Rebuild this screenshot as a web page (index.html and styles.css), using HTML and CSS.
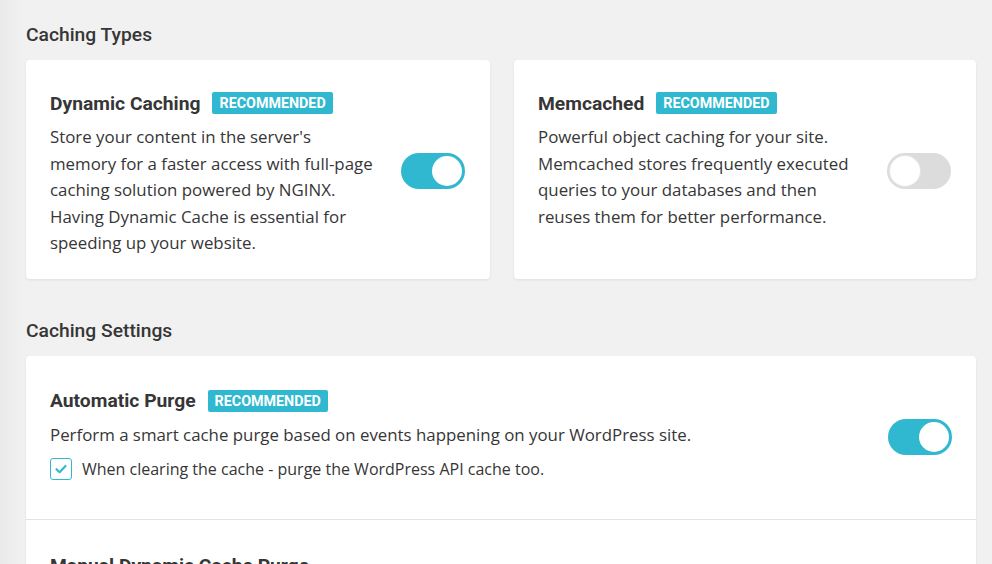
FILE: index.html
```html
<!DOCTYPE html>
<html lang="en">
<head>
    <meta charset="UTF-8">
    <meta name="viewport" content="width=device-width, initial-scale=1.0">
    <title>Caching</title>
    <link rel="stylesheet" href="styles.css">
</head>
<body>
    <div class="page">
        <h2 class="section-title">Caching Types</h2>
        <div class="types">
            <div class="card type-card">
                <div class="card-text">
                    <div class="title-row">
                        <h3>Dynamic Caching</h3>
                        <span class="badge">Recommended</span>
                    </div>
                    <p>Store your content in the server's memory for a faster access with full-page caching solution powered by NGINX. Having Dynamic Cache is essential for speeding up your website.</p>
                </div>
                <span class="toggle on"></span>
            </div>
            <div class="card type-card">
                <div class="card-text">
                    <div class="title-row">
                        <h3>Memcached</h3>
                        <span class="badge">Recommended</span>
                    </div>
                    <p>Powerful object caching for your site. Memcached stores frequently executed queries to your databases and then reuses them for better performance.</p>
                </div>
                <span class="toggle"></span>
            </div>
        </div>

        <h2 class="section-title">Caching Settings</h2>
        <div class="card settings">
            <div class="setting">
                <div class="setting-text">
                    <div class="title-row">
                        <h3>Automatic Purge</h3>
                        <span class="badge">Recommended</span>
                    </div>
                    <p>Perform a smart cache purge based on events happening on your WordPress site.</p>
                    <label class="check-row">
                        <span class="checkbox">
                            <svg width="14" height="14" viewBox="0 0 14 14"><path d="M2.5 7.2 L5.6 10.2 L11.5 4" fill="none" stroke="#2fb8d0" stroke-width="2.2" stroke-linecap="round" stroke-linejoin="round"/></svg>
                        </span>
                        When clearing the cache - purge the WordPress API cache too.
                    </label>
                </div>
                <span class="toggle on"></span>
            </div>
            <div class="setting">
                <div class="setting-text">
                    <div class="title-row">
                        <h3>Manual Dynamic Cache Purge</h3>
                    </div>
                    <p>Purge the dynamic cache manually.</p>
                </div>
            </div>
        </div>
    </div>
</body>
</html>
```

FILE: styles.css
```css
body {
    margin: 0;
    background: #f1f1f1;
    font-family: "Open Sans", sans-serif;
    color: #363636;
    overflow: hidden;
}
.page {
    padding: 23px 16px 0 26px;
    background: linear-gradient(to right, #e9e9e9 0, #f1f1f1 22px);
}
.section-title {
    font-family: Roboto, sans-serif;
    font-weight: 500;
    font-size: 19.25px;
    line-height: 24px;
    margin: 0 0 13px;
    color: #363636;
}
.types {
    display: grid;
    grid-template-columns: 464px 1fr;
    gap: 24px;
    margin-bottom: 40px;
}
.card {
    background: white;
    border-radius: 4px;
    box-shadow: 0 1px 3px rgba(0,0,0,0.08);
}
.type-card {
    display: flex;
    align-items: center;
    justify-content: space-between;
    padding: 25px 25px 22px 24px;
}
.card-text {
    width: 324px;
    align-self: flex-start;
    padding-top: 5px;
}
.title-row {
    display: flex;
    align-items: center;
    gap: 12px;
    height: 26px;
}
.title-row h3 {
    font-family: Roboto, sans-serif;
    font-weight: 700;
    font-size: 19.25px;
    margin: 0;
    color: #363636;
}
.badge {
    font-family: Roboto, sans-serif;
    font-weight: 700;
    font-size: 14.3px;
    text-transform: uppercase;
    color: white;
    background: #2fb8d0;
    border-radius: 2px;
    padding: 0 7px;
    height: 22px;
    line-height: 22px;
}
.card p {
    margin: 8px 0 0;
    font-size: 16.85px;
    line-height: 26.5px;
    color: #363636;
}
.toggle {
    position: relative;
    flex: none;
    width: 64px;
    height: 36px;
    border-radius: 18px;
    background: #dcdcdc;
}
.toggle::after {
    content: "";
    position: absolute;
    top: 3px;
    left: 3px;
    width: 30px;
    height: 30px;
    border-radius: 50%;
    background: white;
    box-shadow: 0 0 0 1px #e4e4e4;
}
.toggle.on {
    background: #2fb8d0;
}
.toggle.on::after {
    left: 31px;
    box-shadow: none;
}
.setting {
    display: flex;
    align-items: center;
    justify-content: space-between;
    padding: 32px 24px 37px 24px;
    border-bottom: 1px solid #e3e3e3;
}
.setting .toggle {
    margin-top: 5px;
}
.check-row {
    display: flex;
    align-items: center;
    gap: 10px;
    margin-top: 8px;
    height: 26px;
    font-size: 16px;
    color: #363636;
}
.checkbox {
    width: 20px;
    height: 20px;
    border: 1px solid #2fb8d0;
    border-radius: 3px;
    display: flex;
    align-items: center;
    justify-content: center;
}
```
